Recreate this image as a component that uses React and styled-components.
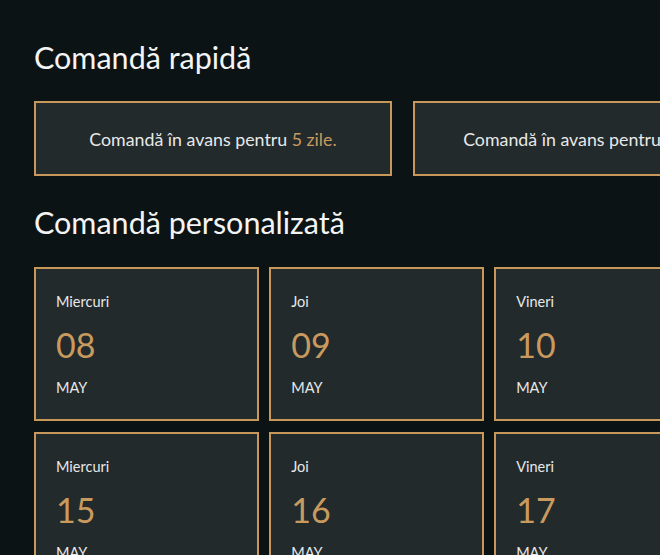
import React from 'react';
import styled, { createGlobalStyle } from 'styled-components';

const GlobalStyle = createGlobalStyle`
  body {
    margin: 0;
    background: #0b1315;
    font-family: Lato, "Noto Sans", sans-serif;
    color: #ececec;
    overflow: hidden;
  }
`;

const Page = styled.div`
  width: 1125px;
  padding: 39px 0 0 34px;
`;

const Title = styled.h2`
  margin: 0;
  font-size: 30.5px;
  font-weight: 400;
  line-height: 36px;
  color: #f4f4f4;
`;

const QuickRow = styled.div`
  display: flex;
  gap: 21px;
  margin: 26px 0 28px;
`;

const QuickCard = styled.button`
  flex: 0 0 358px;
  height: 75px;
  box-sizing: border-box;
  padding: 0;
  background: #222a2c;
  border: 2px solid #c8975a;
  color: #e8e8e8;
  font-family: inherit;
  font-size: 17.8px;
  cursor: pointer;
`;

const Gold = styled.span`
  color: #c99a5e;
`;

const DateGrid = styled.div`
  display: flex;
  flex-direction: column;
  gap: 11px;
  margin-top: 27px;
`;

const DateRow = styled.div`
  display: flex;
  gap: 10px;
`;

const DateCard = styled.div`
  flex: 1 1 auto;
  height: 154px;
  box-sizing: border-box;
  padding: 24px 20px 0;
  background: #222a2c;
  border: 2px solid #c8975a;
  display: flex;
  flex-direction: column;
`;

const DayName = styled.div`
  font-size: 14.5px;
  line-height: 18px;
  color: #e8e8e8;
`;

const DayNumber = styled.div`
  min-width: 43px;
  font-size: 34px;
  line-height: 40px;
  margin-top: 14px;
  color: #c99a5e;
`;

const Month = styled.div`
  font-size: 14.5px;
  line-height: 18px;
  margin-top: 14px;
  color: #e8e8e8;
`;

const quick = [5, 10];

const weeks = [
  [
    ['Miercuri', '08'],
    ['Joi', '09'],
    ['Vineri', '10'],
    ['Luni', '13'],
    ['Marți', '14'],
  ],
  [
    ['Miercuri', '15'],
    ['Joi', '16'],
    ['Vineri', '17'],
    ['Luni', '20'],
    ['Marți', '21'],
  ],
];

const App = () => (
  <>
    <GlobalStyle />
    <Page>
      <Title>Comandă rapidă</Title>
      <QuickRow>
        {quick.map((d) => (
          <QuickCard key={d}>
            Comandă în avans pentru <Gold>{d} zile.</Gold>
          </QuickCard>
        ))}
      </QuickRow>
      <Title>Comandă personalizată</Title>
      <DateGrid>
        {weeks.map((week, i) => (
          <DateRow key={i}>
            {week.map(([day, num]) => (
              <DateCard key={num}>
                <DayName>{day}</DayName>
                <DayNumber>{num}</DayNumber>
                <Month>MAY</Month>
              </DateCard>
            ))}
          </DateRow>
        ))}
      </DateGrid>
    </Page>
  </>
);

export default App;
